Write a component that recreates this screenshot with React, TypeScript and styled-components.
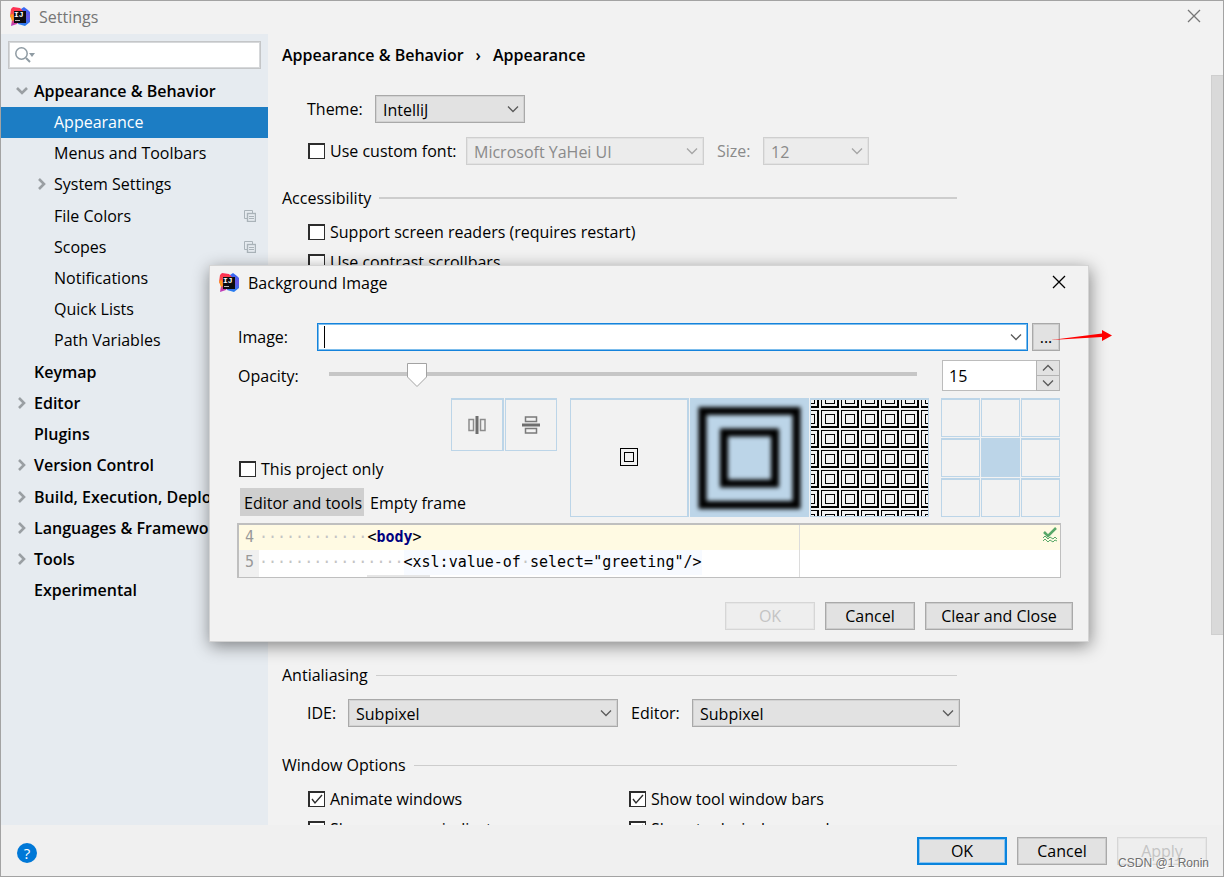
import React, { useState } from "react";
import styled, { createGlobalStyle, css } from "styled-components";

const font = `"Open Sans", "Noto Sans", "Noto Sans CJK SC", sans-serif`;
const mono = `"DejaVu Sans Mono", "Liberation Mono", monospace`;
const tileBlue = "#bcd5e8";

const GlobalStyle = createGlobalStyle`
  *, *::before, *::after { box-sizing: border-box; }
  body { margin: 0; background: #f2f2f2; }
  body, button, input, select { font-family: ${font}; font-size: 16px; line-height: 22px; color: #000; }
`;

const Window = styled.div`
  position: relative;
  display: flex;
  flex-direction: column;
  height: 100vh;
  overflow: hidden;
  background: #f2f2f2;
  border: 1px solid #a3a3a3;
`;

const TitleBar = styled.header<{ $dialog?: boolean }>`
  display: flex;
  align-items: center;
  gap: 9px;
  flex: none;
  height: ${(p) => (p.$dialog ? 36 : 33)}px;
  padding: 0 22px 2px 9px;
  color: ${(p) => (p.$dialog ? "#000" : "#767676")};
`;

const TitleText = styled.h1`
  flex: 1;
  margin: 0;
  font-size: 16px;
  font-weight: 400;
`;

const IconButton = styled.button`
  display: flex;
  padding: 0;
  border: 0;
  background: none;
  color: inherit;
`;

const CloseButton = styled(IconButton)`
  padding-bottom: 2px;
`;

const Body = styled.div`
  display: flex;
  flex: 1;
  min-height: 0;
`;

const Sidebar = styled.nav`
  flex: none;
  width: 267px;
  padding-top: 7px;
  background: #e6ebf0;
  overflow: hidden;
`;

const SearchBox = styled.div`
  display: flex;
  align-items: center;
  height: 28px;
  margin: 0 7px;
  padding-left: 6px;
  border: 1px solid #c4c6c8;
  outline: 1px solid #d6d8da;
  outline-offset: -2px;
  background: #fff;
`;

const BareInput = styled.input`
  flex: 1;
  min-width: 0;
  height: 100%;
  padding: 0 4px;
  border: 0;
  outline: 0;
  background: transparent;
`;

const Tree = styled.ul`
  display: grid;
  grid-auto-rows: 1fr;
  height: 531px;
  margin: 7px 0 0;
  padding: 0;
  list-style: none;
`;

const TreeRow = styled.li<{ $level: number; $selected?: boolean }>`
  display: flex;
  align-items: center;
  gap: 5px;
  padding: 0 12px 2px ${(p) => (p.$level ? 34 : 14)}px;
  white-space: nowrap;
  overflow: hidden;
  font-weight: ${(p) => (p.$level ? 400 : 600)};
  ${(p) =>
    p.$selected &&
    css`
      background: #1c7dc4;
      color: #fff;
    `}
`;

const TreeArrow = styled.span`
  display: flex;
  flex: none;
  width: 14px;
  justify-content: center;
  color: #9a9fa3;
`;

const TreeLink = styled.a`
  flex: 1;
  font-size: 16px;
  color: inherit;
  text-decoration: none;
`;

const Content = styled.main`
  flex: 1;
  min-width: 0;
  padding: 10px 12px 0 14px;
  overflow: hidden;
`;

const Crumbs = styled.h2`
  display: flex;
  gap: 12px;
  margin: 0;
  font-size: 16px;
  font-weight: 600;
`;

const FormRow = styled.div<{ $top?: number }>`
  display: flex;
  align-items: center;
  height: 28px;
  margin-top: ${(p) => p.$top ?? 14}px;
  padding-left: 25px;
`;

const FieldLabel = styled.label<{ $width: number; $muted?: boolean }>`
  flex: none;
  width: ${(p) => p.$width}px;
  white-space: nowrap;
  color: ${(p) => (p.$muted ? "#8a8a8a" : "inherit")};
`;

const CustomFont = styled.div`
  flex: none;
  width: 159px;
  padding-left: 1px;
`;

const SelectBox = styled.div<{ $width: number; $gap?: number }>`
  position: relative;
  flex: none;
  width: ${(p) => p.$width}px;
  height: 28px;
  margin-right: ${(p) => p.$gap ?? 0}px;
  color: #5a5a5a;

  select {
    appearance: none;
    width: 100%;
    height: 100%;
    padding: 1px 24px 0 7px;
    border: 1px solid #a9a9a9;
    border-radius: 0;
    outline: 1px solid #d2d2d2;
    outline-offset: -2px;
    background: #e2e2e2;
    opacity: 1;
  }
  select:disabled {
    border-color: #cfcfcf;
    outline-color: #e2e2e2;
    background: #ececec;
    color: #8a8a8a;
  }
  select:disabled + svg {
    color: #a5a5a5;
  }
  svg {
    position: absolute;
    right: 6px;
    top: 10px;
    pointer-events: none;
  }
`;

const Group = styled.section<{ $top: number }>`
  max-width: 675px;
  margin-top: ${(p) => p.$top}px;
`;

const GroupTitle = styled.h3<{ $thick?: boolean }>`
  display: flex;
  align-items: center;
  gap: 8px;
  margin: 0;
  font-size: 16px;
  font-weight: 400;

  &::after {
    content: "";
    flex: 1;
    height: ${(p) => (p.$thick ? 2 : 1)}px;
    background: #cdcdcd;
  }
`;

const CheckGrid = styled.div<{ $cols?: boolean }>`
  display: grid;
  grid-template-columns: ${(p) => (p.$cols ? "321px 1fr" : "1fr")};
  row-gap: 8px;
  margin-top: 12px;
  padding-left: 26px;
`;

const CheckLabel = styled.label`
  display: flex;
  align-items: center;
  gap: 5px;
  white-space: nowrap;
`;

const CheckMark = styled.span`
  display: grid;
  flex: none;
  width: 17px;
  height: 16px;

  input {
    appearance: none;
    grid-area: 1 / 1;
    width: 17px;
    height: 16px;
    margin: 0;
    border: 1px solid #2d2d2d;
    border-top-width: 2px;
    border-left-width: 2px;
    background: #fff;
  }
  svg {
    grid-area: 1 / 1;
    visibility: hidden;
    pointer-events: none;
  }
  input:checked + svg {
    visibility: visible;
  }
`;

const Scrollbar = styled.div`
  flex: none;
  width: 12px;
  height: 560px;
  margin-top: 41px;
  border: 1px solid #cfcfcf;
  border-right: 0;
  background: #d9d9d9;
`;

const Footer = styled.footer`
  display: flex;
  align-items: center;
  gap: 10px;
  flex: none;
  height: 51px;
  padding: 1px 16px 0;
  background: #f0f0f0;
`;

const HelpButton = styled.button`
  width: 20px;
  height: 20px;
  margin: 4px auto 0 0;
  padding: 0;
  border: 0;
  border-radius: 50%;
  background: #0078d7;
  color: #fff;
  font-size: 15px;
  line-height: 20px;
`;

const Button = styled.button<{ $primary?: boolean; $wide?: boolean }>`
  width: ${(p) => (p.$wide ? 148 : 90)}px;
  height: 28px;
  padding: 0 0 1px;
  border: ${(p) => (p.$primary ? "2px solid #0a84dd" : "1px solid #a9a9a9")};
  outline: ${(p) => (p.$primary ? "1px solid #8cc4ef" : "1px solid #cccccc")};
  outline-offset: ${(p) => (p.$primary ? -3 : -2)}px;
  background: #e2e2e2;

  &:disabled {
    border-color: #d6d6d6;
    outline-color: #e6e6e6;
    background: #eeeeee;
    color: #c4c4c4;
  }
`;

const Watermark = styled.div`
  position: absolute;
  right: 14px;
  bottom: 5px;
  font-family: "Liberation Sans", sans-serif;
  font-size: 12px;
  line-height: 16px;
  color: #6f6f6f;
  text-shadow: 1px 1px 0 #fff;
`;

const Dialog = styled.section`
  position: absolute;
  left: 208px;
  top: 264px;
  width: 880px;
  height: 377px;
  border: 1px solid #d4d4d4;
  background: #f2f2f2;
  box-shadow: 1px 4px 16px rgba(0, 0, 0, 0.45);
`;

const DialogBody = styled.div`
  display: flex;
  flex-direction: column;
  padding: 21px 27px 0;
`;

const DialogRow = styled.div<{ $top?: number }>`
  display: flex;
  align-items: center;
  margin-top: ${(p) => p.$top ?? 0}px;
  padding: 0 1px;
`;

const ImageField = styled.div`
  display: flex;
  align-items: center;
  flex: 1;
  height: 28px;
  margin-right: 4px;
  padding: 0 5px 0 6px;
  border: 1px solid #1583dc;
  outline: 1px solid #7dbdec;
  outline-offset: -2px;
  background: #fff;
  color: #5a5a5a;
`;

const Caret = styled.span`
  flex: none;
  width: 1px;
  height: 22px;
  background: #000;
`;

const BrowseButton = styled(Button)`
  width: 28px;
`;

const SliderBox = styled.div`
  position: relative;
  flex: 1;
  height: 31px;
  margin: 0 25px 0 11px;

  input {
    appearance: none;
    width: 100%;
    height: 4px;
    margin: 12px 0 0;
    display: block;
    background: #c6c6c6;
  }
  input::-webkit-slider-thumb {
    appearance: none;
    width: 20px;
    height: 24px;
    opacity: 0;
  }
`;

const SliderThumb = styled.svg`
  position: absolute;
  top: 2px;
  margin-left: -11px;
  pointer-events: none;
`;

const Spinner = styled.div`
  display: grid;
  grid-template-columns: 1fr 24px;
  grid-template-rows: 1fr 1fr;
  width: 118px;
  height: 31px;

  input {
    grid-row: 1 / 3;
    min-width: 0;
    padding: 0 6px;
    border: 1px solid #bcbcbc;
    border-right: 0;
    border-radius: 0;
    outline: 0;
    background: #fff;
  }
  button {
    display: flex;
    align-items: center;
    justify-content: center;
    padding: 0;
    border: 1px solid #b4b4b4;
    background: #e2e2e2;
    color: #5a5a5a;
  }
  button:last-child {
    border-top: 0;
  }
`;

const Placement = styled.div`
  display: flex;
  height: 119px;
  margin-top: 7px;
  padding-right: 1px;
`;

const Options = styled.div`
  display: flex;
  flex-direction: column;
  flex: 1;
  margin-right: 13px;
`;

const FlipButtons = styled.div`
  display: flex;
  justify-content: flex-end;
  gap: 1px;
  margin-bottom: 7px;
`;

const OptionCheck = styled.div`
  padding-left: 2px;
`;

const Tile = styled.button<{ $width: number; $height?: number; $on?: boolean; $thick?: boolean }>`
  display: flex;
  align-items: center;
  justify-content: center;
  width: ${(p) => p.$width}px;
  height: ${(p) => p.$height ?? p.$width}px;
  padding: 0;
  overflow: hidden;
  border: 1px solid ${tileBlue};
  border-top-width: 2px;
  border-right-width: ${(p) => (p.$thick ? 2 : 1)}px;
  background: ${(p) => (p.$on ? tileBlue : "transparent")};
`;

const Fills = styled.div`
  display: flex;
  gap: 1px;
  margin-right: 12px;
`;

const Anchors = styled.div`
  display: grid;
  grid-template-columns: repeat(3, 39px);
  gap: 1px;
`;

const Tabs = styled.div`
  display: flex;
  margin: 8px 0 0 3px;
`;

const Tab = styled.button<{ $on?: boolean }>`
  height: 28px;
  margin-right: 2px;
  padding: 1px 2px 0 4px;
  border: 0;
  background: ${(p) => (p.$on ? "#cfcfcf" : "transparent")};
`;

const CodePane = styled.div`
  position: relative;
  height: 55px;
  margin-top: 6px;
  border: 1px solid #bfbfbf;
  border-top-width: 2px;
  border-left-width: 2px;
  background: #fff;
  overflow: hidden;
  font-family: ${mono};
  font-size: 15px;
`;

const CodeLine = styled.div<{ $active?: boolean }>`
  display: flex;
  height: ${(p) => (p.$active ? 25 : 27)}px;
  line-height: 25px;
  background: ${(p) => (p.$active ? "#fffae3" : "transparent")};
  white-space: pre;

  b {
    color: #000080;
  }
`;

const LineNo = styled.span<{ $active?: boolean }>`
  width: 20px;
  padding-left: 6px;
  background: ${(p) => (p.$active ? "transparent" : "#f0f0f0")};
  color: #999;
`;

const Dots = styled.span`
  color: #c4c4c4;
`;

const TagHighlight = styled.span`
  height: 25px;
  background: #f7faff;
`;

const Margin = styled.span`
  position: absolute;
  top: 0;
  bottom: 0;
  right: 260px;
  width: 1px;
  background: #dcdcdc;
`;

const Analysis = styled.svg`
  position: absolute;
  right: 2px;
  top: 2px;
`;

const NextHint = styled.span`
  position: absolute;
  left: 128px;
  bottom: 0;
  width: 63px;
  height: 2px;
  background: #e6e6e6;
`;

const DialogButtons = styled.div`
  display: flex;
  justify-content: flex-end;
  gap: 10px;
  margin: 24px -12px 0 0;
`;

const Pointer = styled.svg`
  position: absolute;
  left: 1049px;
  top: 328px;
  pointer-events: none;
`;

const Logo = ({ id }: { id: string }) => (
  <svg width="20" height="20" viewBox="0 0 20 20" aria-hidden="true">
    <defs>
      <linearGradient id={`${id}b`} x1="0" y1="0" x2="0" y2="1">
        <stop offset="0" stopColor="#2f6bf5" />
        <stop offset="0.5" stopColor="#6b57e8" />
        <stop offset="1" stopColor="#1f80f0" />
      </linearGradient>
      <linearGradient id={`${id}r`} x1="0" y1="0" x2="0" y2="1">
        <stop offset="0" stopColor="#fe2857" />
        <stop offset="0.5" stopColor="#fb5a3c" />
        <stop offset="1" stopColor="#b638c8" />
      </linearGradient>
    </defs>
    <path d="M11 2 14 0 18 3 20 5V15L15 19 8 17z" fill={`url(#${id}b)`} />
    <path d="M1 2 3 0 10 1 13 4 9 14 7 17 1 19 2 13 0 9z" fill={`url(#${id}r)`} />
    <path d="M0 8 3 7 4 13 2 14z" fill="#fc9a1d" />
    <rect x="4" y="4" width="12" height="12" fill="#0c0c10" />
    <text x="4" y="10" fill="#fff" fontSize="8" fontWeight="700" fontFamily="Liberation Mono, monospace">IJ</text>
    <rect x="5" y="13" width="5" height="1" fill="#bbb" />
  </svg>
);

const Close = () => (
  <svg width="14" height="14" viewBox="0 0 14 14" aria-hidden="true">
    <path d="M1 1 13 13M13 1 1 13" stroke="currentColor" strokeWidth="1.3" fill="none" />
  </svg>
);

const Chevron = ({ up }: { up?: boolean }) => (
  <svg width="12" height="8" viewBox="0 0 12 8" aria-hidden="true">
    <path d={up ? "M1 6.5 6 1.5 11 6.5" : "M1 1.5 6 6.5 11 1.5"} stroke="currentColor" strokeWidth="1.3" fill="none" />
  </svg>
);

const Arrow = ({ open }: { open: boolean }) => (
  <svg width="12" height="12" viewBox="0 0 12 12" aria-hidden="true">
    <path d={open ? "M1 3 6 8 11 3" : "M3 1 8 6 3 11"} stroke="currentColor" strokeWidth="2.6" fill="none" />
  </svg>
);

const ProjectIcon = () => (
  <svg width="12" height="12" viewBox="0 0 12 12" fill="none" stroke="#aab3b9" aria-hidden="true">
    <path d="M3 8.5H.5V.5H8.500V3" />
    <rect x="3.5" y="3.5" width="8" height="8" strokeWidth="1.4" />
    <path d="M5 6.5h5M5 8.5h5" />
  </svg>
);

const Check = ({ label, checked = false }: { label: string; checked?: boolean }) => (
  <CheckLabel>
    <CheckMark>
      <input type="checkbox" defaultChecked={checked} />
      <svg width="17" height="16" viewBox="0 0 17 16" aria-hidden="true">
        <path d="M4 8 7 12 14 4" stroke="#2d2d2d" strokeWidth="1.4" fill="none" />
      </svg>
    </CheckMark>
    {label}
  </CheckLabel>
);

type SelectProps = { id: string; value: string; width: number; gap?: number; disabled?: boolean };

const Select = ({ id, value, width, gap, disabled }: SelectProps) => (
  <SelectBox $width={width} $gap={gap}>
    <select id={id} disabled={disabled}>
      <option>{value}</option>
    </select>
    <Chevron />
  </SelectBox>
);

type Node = { name: string; level?: number; arrow?: "open" | "closed"; project?: boolean };

const nodes: Node[] = [
  { name: "Appearance & Behavior", arrow: "open" },
  { name: "Appearance", level: 1 },
  { name: "Menus and Toolbars", level: 1 },
  { name: "System Settings", level: 1, arrow: "closed" },
  { name: "File Colors", level: 1, project: true },
  { name: "Scopes", level: 1, project: true },
  { name: "Notifications", level: 1 },
  { name: "Quick Lists", level: 1 },
  { name: "Path Variables", level: 1 },
  { name: "Keymap" },
  { name: "Editor", arrow: "closed" },
  { name: "Plugins" },
  { name: "Version Control", arrow: "closed" },
  { name: "Build, Execution, Deployment", arrow: "closed" },
  { name: "Languages & Frameworks", arrow: "closed" },
  { name: "Tools", arrow: "closed" },
  { name: "Experimental" },
];

const anchorNames = ["top left", "top", "top right", "left", "center", "right", "bottom left", "bottom", "bottom right"];

function BackgroundDialog() {
  const [opacity, setOpacity] = useState(15);
  return (
    <Dialog role="dialog" aria-labelledby="bg-title">
      <TitleBar $dialog>
        <Logo id="dlg" />
        <TitleText id="bg-title">Background Image</TitleText>
        <CloseButton aria-label="Close dialog"><Close /></CloseButton>
      </TitleBar>
      <DialogBody>
        <DialogRow>
          <FieldLabel htmlFor="image" $width={79}>Image:</FieldLabel>
          <ImageField>
            <Caret />
            <BareInput id="image" />
            <IconButton aria-label="Recent images"><Chevron /></IconButton>
          </ImageField>
          <BrowseButton aria-label="Browse">...</BrowseButton>
        </DialogRow>
        <DialogRow $top={9}>
          <FieldLabel htmlFor="opacity" $width={80}>Opacity:</FieldLabel>
          <SliderBox>
            <input id="opacity" type="range" min="0" max="100" value={opacity} onChange={(e) => setOpacity(Number(e.target.value))} />
            <SliderThumb width="22" height="26" viewBox="0 0 22 26" style={{ left: `${opacity}%` }}>
              <path d="M1.5 1.5H20.5V15L11 24.5 1.5 15z" fill="#fff" stroke="#a3a3a3" />
            </SliderThumb>
          </SliderBox>
          <Spinner>
            <input aria-label="Opacity value" value={opacity} onChange={(e) => setOpacity(Number(e.target.value) || 0)} />
            <button aria-label="Increase" onClick={() => setOpacity(Math.min(100, opacity + 1))}><Chevron up /></button>
            <button aria-label="Decrease" onClick={() => setOpacity(Math.max(0, opacity - 1))}><Chevron /></button>
          </Spinner>
        </DialogRow>
        <Placement>
          <Options>
            <FlipButtons>
              <Tile $width={53} $thick aria-label="Flip horizontally">
                <svg width="18" height="18" viewBox="0 0 18 18" fill="none" stroke="#8c8c8c" strokeWidth="1.5">
                  <rect x="1" y="3.5" width="4.5" height="11" />
                  <rect x="12.5" y="3.5" width="4.5" height="11" />
                  <path d="M9 0v18" stroke="#6e6e6e" strokeWidth="3" />
                </svg>
              </Tile>
              <Tile $width={52} $height={53} aria-label="Flip vertically">
                <svg width="18" height="18" viewBox="0 0 18 18" fill="none" stroke="#7a7a7a" strokeWidth="1.5">
                  <rect x="3.5" y="1" width="11" height="4.5" />
                  <rect x="3.5" y="12.5" width="11" height="4.5" />
                  <path d="M0 9h18" stroke="#6e6e6e" strokeWidth="3" />
                </svg>
              </Tile>
            </FlipButtons>
            <OptionCheck><Check label="This project only" /></OptionCheck>
            <Tabs>
              <Tab $on>Editor and tools</Tab>
              <Tab>Empty frame</Tab>
            </Tabs>
          </Options>
          <Fills>
            <Tile $width={119} $thick aria-label="Plain">
              <svg width="18" height="20" viewBox="0 0 18 20" fill="none" stroke="#000">
                <rect x="0.5" y="0.5" width="17" height="17" />
                <rect x="4.5" y="4.5" width="9" height="9" />
              </svg>
            </Tile>
            <Tile $width={119} $on aria-label="Scale">
              <svg width="117" height="116" viewBox="0 0 117 116" fill="none" stroke="#000" strokeWidth="8">
                <defs>
                  <filter id="soft" x="-10%" y="-10%" width="120%" height="120%">
                    <feGaussianBlur stdDeviation="2" />
                  </filter>
                </defs>
                <g filter="url(#soft)">
                  <rect x="11.5" y="11" width="94" height="94" />
                  <rect x="33" y="32.5" width="51" height="51" />
                </g>
              </svg>
            </Tile>
            <Tile $width={119} aria-label="Tile">
              <svg width="117" height="116" viewBox="0 0 117 116">
                <defs>
                  <pattern id="tiles" x="10" y="10" width="20" height="20" patternUnits="userSpaceOnUse">
                    <path d="M0 0H18V18H0zM1 1V16H16V1z" fill="#000" fillRule="evenodd" />
                    <rect x="4.5" y="4.5" width="9" height="9" fill="none" stroke="#000" />
                  </pattern>
                </defs>
                <rect width="117" height="116" fill="url(#tiles)" />
              </svg>
            </Tile>
          </Fills>
          <Anchors>
            {anchorNames.map((name) => (
              <Tile key={name} $width={39} $on={name === "center"} aria-label={`Anchor ${name}`} />
            ))}
          </Anchors>
        </Placement>
        <CodePane>
          <CodeLine $active>
            <LineNo $active>4</LineNo>
            <Dots>{"·".repeat(12)}</Dots>
            <span>&lt;<b>body</b>&gt;</span>
          </CodeLine>
          <CodeLine>
            <LineNo>5</LineNo>
            <Dots>{"·".repeat(16)}</Dots>
            <TagHighlight>&lt;xsl:value-of<Dots>·</Dots>select="greeting"/&gt;</TagHighlight>
          </CodeLine>
          <NextHint />
          <Margin />
          <Analysis width="16" height="16" viewBox="0 0 16 16" fill="none" stroke="#59a869">
            <path d="M2 5 6 9 14 1" strokeWidth="2.5" />
            <path d="M1 11 3 9 6 12 8 10 11 12 13 10 15 12M1 14 3 12 6 15 8 13 11 15 13 13 15 14" />
          </Analysis>
        </CodePane>
        <DialogButtons>
          <Button disabled>OK</Button>
          <Button>Cancel</Button>
          <Button $wide>Clear and Close</Button>
        </DialogButtons>
      </DialogBody>
    </Dialog>
  );
}

export default function App() {
  return (
    <Window>
      <GlobalStyle />
      <TitleBar>
        <Logo id="main" />
        <TitleText>Settings</TitleText>
        <CloseButton aria-label="Close"><Close /></CloseButton>
      </TitleBar>
      <Body>
        <Sidebar>
          <SearchBox>
            <svg width="20" height="16" viewBox="0 0 20 16" fill="none" stroke="#8f9ba3" aria-hidden="true">
              <circle cx="6.5" cy="6.5" r="5.7" strokeWidth="1.5" />
              <path d="M11 11 15 15" strokeWidth="2" />
              <path d="M14 6h6l-3 4z" fill="#8f9ba3" stroke="none" />
            </svg>
            <BareInput aria-label="Search settings" />
          </SearchBox>
          <Tree>
            {nodes.map((n) => (
              <TreeRow key={n.name} $level={n.level ?? 0} $selected={n.name === "Appearance"}>
                <TreeArrow>{n.arrow && <Arrow open={n.arrow === "open"} />}</TreeArrow>
                <TreeLink href="#">{n.name}</TreeLink>
                {n.project && <ProjectIcon />}
              </TreeRow>
            ))}
          </Tree>
        </Sidebar>
        <Content>
          <Crumbs>
            <span>Appearance &amp; Behavior</span>
            <span>›</span>
            <span>Appearance</span>
          </Crumbs>
          <FormRow $top={29}>
            <FieldLabel htmlFor="theme" $width={68}>Theme:</FieldLabel>
            <Select id="theme" value="IntelliJ" width={150} />
          </FormRow>
          <FormRow>
            <CustomFont><Check label="Use custom font:" /></CustomFont>
            <Select id="font" value="Microsoft YaHei UI" width={238} gap={13} disabled />
            <FieldLabel htmlFor="size" $width={46} $muted>Size:</FieldLabel>
            <Select id="size" value="12" width={106} disabled />
          </FormRow>
          <Group $top={22}>
            <GroupTitle $thick>Accessibility</GroupTitle>
            <CheckGrid>
              <Check label="Support screen readers (requires restart)" />
              <Check label="Use contrast scrollbars" />
            </CheckGrid>
          </Group>
          <Group $top={391}>
            <GroupTitle>Antialiasing</GroupTitle>
          </Group>
          <FormRow $top={13}>
            <FieldLabel htmlFor="ide" $width={41}>IDE:</FieldLabel>
            <Select id="ide" value="Subpixel" width={270} gap={13} />
            <FieldLabel htmlFor="editor" $width={61}>Editor:</FieldLabel>
            <Select id="editor" value="Subpixel" width={268} />
          </FormRow>
          <Group $top={27}>
            <GroupTitle>Window Options</GroupTitle>
            <CheckGrid $cols>
              <Check label="Animate windows" checked />
              <Check label="Show tool window bars" checked />
              <Check label="Show memory indicator" />
              <Check label="Show tool window numbers" checked />
            </CheckGrid>
          </Group>
        </Content>
        <Scrollbar />
      </Body>
      <Footer>
        <HelpButton aria-label="Help">?</HelpButton>
        <Button $primary>OK</Button>
        <Button>Cancel</Button>
        <Button disabled>Apply</Button>
      </Footer>
      <BackgroundDialog />
      <Pointer width="64" height="14" viewBox="0 0 64 14" aria-hidden="true">
        <path d="M1 11 52 4.500V1L62 6.500 52 12V8z" fill="#fe0000" />
      </Pointer>
      <Watermark>CSDN @1 Ronin</Watermark>
    </Window>
  );
}
